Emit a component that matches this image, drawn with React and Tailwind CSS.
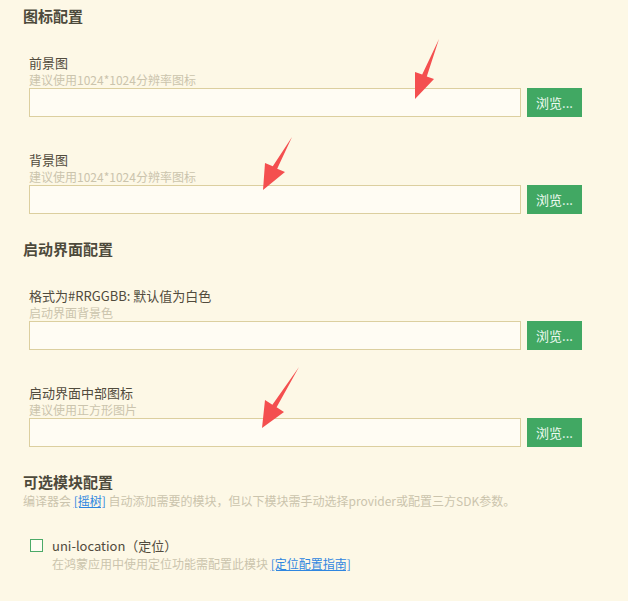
import React from "react";

const FONT = { fontFamily: '"Noto Sans CJK SC", "Noto Sans", sans-serif' };

function Field({ label, hint, className = "" }) {
  return (
    <div className={`pl-[6px] ${className}`}>
      <div className="text-[13px] leading-[17px] text-[#514b3d]">{label}</div>
      <div className="text-[12px] leading-[17px] text-[#cbc4ad]">{hint}</div>
      <div className="flex items-stretch gap-[6px]">
        <div className="w-[492px] h-[29px] bg-[#fffcf3] border border-[#dccf9f]" />
        <button className="w-[55px] h-[29px] bg-[#41a863] text-[13px] text-[#eefaf1]">浏览...</button>
      </div>
    </div>
  );
}

function Heading({ children, className = "" }) {
  return <div className={`text-[15px] leading-[20px] font-bold text-[#4d4a3c] ${className}`}>{children}</div>;
}

// annotation arrows drawn over the form
const arrows = [
  [[439, 39], [426.8, 76.4], [434, 79], [415, 99], [415, 72], [422.2, 74.6]],
  [[292, 137], [277.2, 168.7], [285, 172], [263, 190], [265, 163], [272.8, 166.3]],
  [[299, 367], [276.6, 407.3], [284, 412], [262, 428], [265, 400], [272.4, 404.7]],
];

export default function App() {
  return (
    <div className="relative w-[628px] h-[601px] overflow-hidden bg-[#fdf8e6] pl-[23px] pt-[6px]" style={FONT}>
      <Heading>图标配置</Heading>
      <Field className="mt-[28px]" label="前景图" hint="建议使用1024*1024分辨率图标" />
      <Field className="mt-[34px]" label="背景图" hint="建议使用1024*1024分辨率图标" />

      <Heading className="mt-[25px]">启动界面配置</Heading>
      <Field className="mt-[28px]" label="格式为#RRGGBB: 默认值为白色" hint="启动界面背景色" />
      <Field className="mt-[34px]" label="启动界面中部图标" hint="建议使用正方形图片" />

      <Heading className="mt-[25px]">可选模块配置</Heading>
      <div className="text-[12px] leading-[17px] text-[#cbc4ad]">
        编译器会 <span className="text-[#2f86e0] underline">[摇树]</span> 自动添加需要的模块，但以下模块需手动选择provider或配置三方SDK参数。
      </div>

      <div className="mt-[28px] pl-[7px]">
        <div className="flex items-center h-[17px]">
          <span className="w-[13px] h-[13px] border border-[#4caa68] bg-[#fffcf3]" />
          <span className="ml-[9px] text-[13px] leading-[17px] text-[#514b3d]">uni-location（定位）</span>
        </div>
        <div className="pl-[22px] mt-[1px] text-[12px] leading-[17px] text-[#cbc4ad]">
          在鸿蒙应用中使用定位功能需配置此模块 <span className="text-[#2f86e0] underline">[定位配置指南]</span>
        </div>
      </div>

      <svg className="absolute inset-0 pointer-events-none" width="628" height="601">
        {arrows.map((pts, i) => (
          <polygon key={i} points={pts.map((p) => p.join(",")).join(" ")} fill="#f44f4f" />
        ))}
      </svg>
    </div>
  );
}
